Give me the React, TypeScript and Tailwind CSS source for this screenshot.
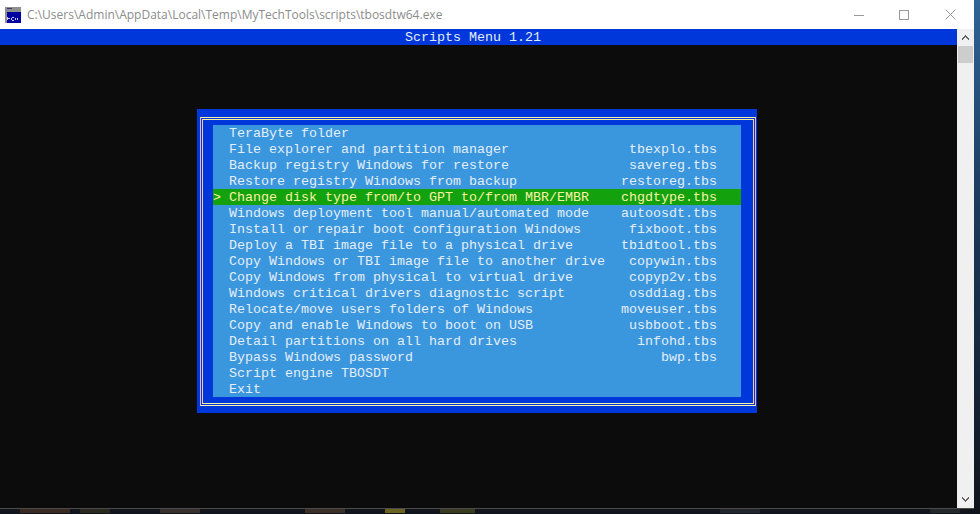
const scripts: [string, string][] = [
  ['TeraByte folder', ''],
  ['File explorer and partition manager', 'tbexplo.tbs'],
  ['Backup registry Windows for restore', 'savereg.tbs'],
  ['Restore registry Windows from backup', 'restoreg.tbs'],
  ['Change disk type from/to GPT to/from MBR/EMBR', 'chgdtype.tbs'],
  ['Windows deployment tool manual/automated mode', 'autoosdt.tbs'],
  ['Install or repair boot configuration Windows', 'fixboot.tbs'],
  ['Deploy a TBI image file to a physical drive', 'tbidtool.tbs'],
  ['Copy Windows or TBI image file to another drive', 'copywin.tbs'],
  ['Copy Windows from physical to virtual drive', 'copyp2v.tbs'],
  ['Windows critical drivers diagnostic script', 'osddiag.tbs'],
  ['Relocate/move users folders of Windows', 'moveuser.tbs'],
  ['Copy and enable Windows to boot on USB', 'usbboot.tbs'],
  ['Detail partitions on all hard drives', 'infohd.tbs'],
  ['Bypass Windows password', 'bwp.tbs'],
  ['Script engine TBOSDT', ''],
  ['Exit', ''],
];

const SELECTED = 4;

function ConsoleIcon() {
  return (
    <svg width="16" height="16" viewBox="0 0 16 16" shapeRendering="crispEdges">
      <rect width="16" height="16" fill="#8f8f8f" />
      <rect x="2" y="5" width="14" height="11" fill="#0000a0" />
      <rect x="2" y="1" width="5" height="1" fill="#3a3a6a" />
      <path d="M3 11h2v1h-2zM2 10h1v3h-1zM7 10h2v1h-2zM7 13h2v1h-2zM6 11h1v2h-1zM10 11h1v2h-1zM12 11h1v2h-1z" fill="#c8c8f0" />
    </svg>
  );
}

function WindowButtons() {
  return (
    <div className="flex items-center">
      <svg width="10" height="10" viewBox="0 0 10 10" className="mr-[35px]" shapeRendering="crispEdges">
        <rect x="0" y="5" width="10" height="1" fill="#999999" />
      </svg>
      <svg width="10" height="10" viewBox="0 0 10 10" className="mr-[36px]" shapeRendering="crispEdges">
        <rect x="0.5" y="0.5" width="9" height="9" fill="none" stroke="#999999" />
      </svg>
      <svg width="11" height="11" viewBox="0 0 11 11">
        <path d="M0.5 0.5L10.5 10.5M10.5 0.5L0.5 10.5" stroke="#999999" strokeWidth="1" fill="none" />
      </svg>
    </div>
  );
}

export default function App() {
  return (
    <div className="relative flex h-[514px] w-[980px] flex-col overflow-hidden bg-[linear-gradient(#2f6496,#1b3a5c_40%,#10141c)]">
      <div className="flex h-[509px] w-[974px] shrink-0 flex-col border-b border-[#4a4a4a]">
        <div className="flex h-[29px] shrink-0 items-center justify-between bg-white pl-[5px] pr-[18px]">
          <div className="flex items-center gap-[6px]">
            <ConsoleIcon />
            <span className="text-[12px] text-[#8c8c8c] [font-family:'Open_Sans','Noto_Sans',sans-serif]">
              C:\Users\Admin\AppData\Local\Temp\MyTechTools\scripts\tbosdtw64.exe
            </span>
          </div>
          <WindowButtons />
        </div>

        <div className="flex min-h-0 flex-1">
          <div className="flex-1 bg-[#0c0c0c] text-[13.33px] leading-[16px] text-[#e4eef8] [font-family:'Liberation_Mono',monospace]">
            <div className="h-[16px] whitespace-pre bg-[#0037da] pl-[405px] pt-px">Scripts Menu 1.21</div>

            <div className="ml-[197px] mt-[64px] h-[304px] w-[560px] bg-[#0037da] pb-[7px] pl-[3px] pr-[1px] pt-[8px]">
              <div className="h-full border-x border-y border-x-[#f3b4c8] border-y-[#f9f1a5] p-px">
                <div className="h-full border-x border-y border-x-[#f3c8b0] border-y-[#f9f1a5] pb-[6px] pl-[10px] pr-[12px] pt-[5px]">
                  <div className="h-[272px] bg-[#3a96dd]">
                    {scripts.map(([label, file], i) => (
                      <div
                        key={label}
                        className={`flex h-[16px] justify-between whitespace-pre pr-[24px] pt-px ${
                          i === SELECTED ? 'bg-[#13a10e] text-[#f9f1a5]' : ''
                        }`}
                      >
                        <span>
                          <span className="inline-block w-[16px]">{i === SELECTED ? '>' : ' '}</span>
                          {label}
                        </span>
                        <span>{file}</span>
                      </div>
                    ))}
                  </div>
                </div>
              </div>
            </div>
          </div>

          <div className="flex w-[17px] shrink-0 flex-col items-center bg-[#f0f0f0]">
            <svg width="9" height="17" viewBox="0 0 9 17" shapeRendering="crispEdges">
              <path d="M4 6h1v1h1v1h1v1h1v2h-1v-1h-1v-1h-1v-1h-1v1h-1v1h-1v1h-1v-2h1v-1h1v-1h1z" fill="#606060" />
            </svg>
            <div className="h-[17px] w-[15px] bg-[#cdcdcd]" />
            <div className="flex-1" />
            <svg width="9" height="17" viewBox="0 0 9 17" shapeRendering="crispEdges">
              <path d="M4 11h1v-1h1v-1h1v-1h1v-2h-1v1h-1v1h-1v1h-1v-1h-1v-1h-1v-1h-1v2h1v1h1v1h1z" fill="#606060" />
            </svg>
          </div>
        </div>
      </div>

      {/* desktop wallpaper showing under the window */}
      <svg width="980" height="4" viewBox="0 0 980 4" className="shrink-0">
        <rect width="980" height="4" fill="#12161c" />
        <rect x="20" y="0" width="50" height="4" fill="#3a2a24" />
        <rect x="80" y="0" width="30" height="4" fill="#2a2a20" />
        <rect x="160" y="0" width="40" height="4" fill="#38302c" />
        <rect x="305" y="0" width="40" height="4" fill="#3a3028" />
        <rect x="385" y="0" width="20" height="4" fill="#6a6420" />
        <rect x="440" y="0" width="35" height="4" fill="#3c3c20" />
        <rect x="720" y="0" width="40" height="4" fill="#20262c" />
        <rect x="930" y="0" width="30" height="4" fill="#24282a" />
      </svg>
    </div>
  );
}
